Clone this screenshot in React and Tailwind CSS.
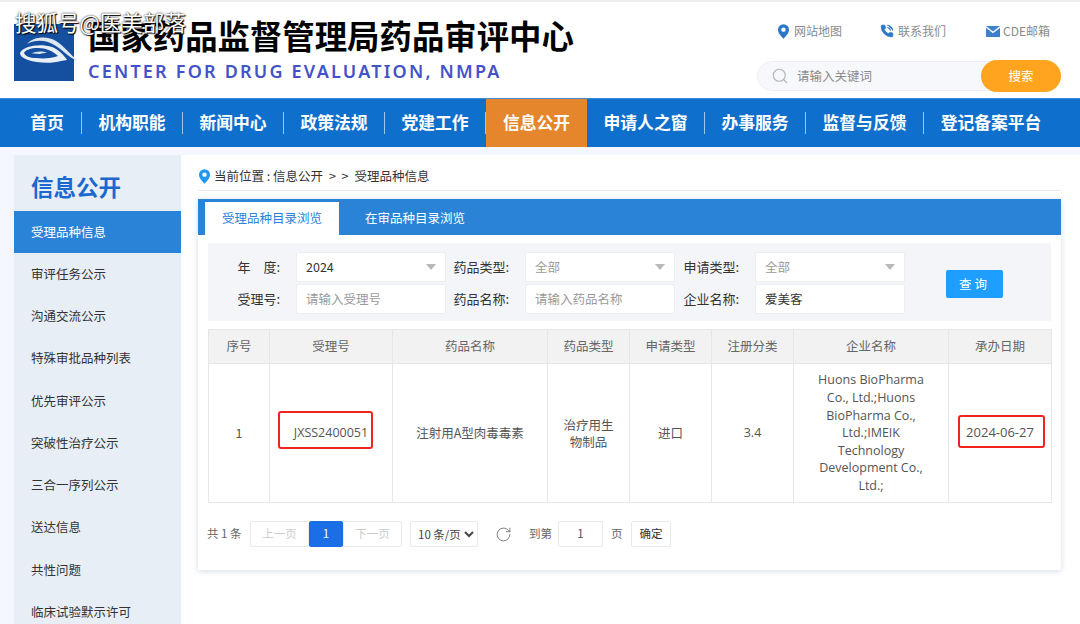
import { PhoneCall, RotateCw, Search } from "lucide-react";

const cjk = "font-['Noto_Sans_CJK_SC','Noto_Sans',sans-serif]";

const navItems = [
  { label: "首页", width: "w-[69px]" },
  { label: "机构职能", width: "w-[101px]" },
  { label: "新闻中心", width: "w-[101px]" },
  { label: "政策法规", width: "w-[101px]" },
  { label: "党建工作", width: "w-[101px]" },
  { label: "信息公开", width: "w-[101px]", active: true },
  { label: "申请人之窗", width: "w-[118px]" },
  { label: "办事服务", width: "w-[101px]" },
  { label: "监督与反馈", width: "w-[118px]" },
  { label: "登记备案平台", width: "w-[134px]", last: true },
];

const sideItems = [
  "受理品种信息",
  "审评任务公示",
  "沟通交流公示",
  "特殊审批品种列表",
  "优先审评公示",
  "突破性治疗公示",
  "三合一序列公示",
  "送达信息",
  "共性问题",
  "临床试验默示许可",
];

const columns = [
  ["序号", "w-[61px]"],
  ["受理号", "w-[123px]"],
  ["药品名称", "w-[155px]"],
  ["药品类型", "w-[82px]"],
  ["申请类型", "w-[82px]"],
  ["注册分类", "w-[82px]"],
  ["企业名称", "w-[155px]"],
  ["承办日期", "w-[103px]"],
];

function Logo() {
  return (
    <svg viewBox="0 0 60 57" className="h-[57px] w-[60px] shrink-0 overflow-visible">
      <rect width="60" height="57" fill="#14509f" />
      <path d="M13 20C20 12 34 12 42 17c8 5 14 13 22 20-9-3-14-10-22-15C33 16 22 15 13 20z" fill="#dde7f2" />
      <path
        fillRule="evenodd"
        d="M6 29C9 22 26 19 38 23c6 2 12 8 15 13-2 0-4 1-6 1-10 3-24 2-33-1-5-2-8-4-8-7zm4 0c1 3 6 5 12 5 8 1 17 0 22-2-5-5-12-8-20-8-7 0-13 2-14 5z"
        fill="#e9eff6"
      />
      <path d="M17 30c5-3 12-3 16-1-3 0-5 0-7 1-3 0-6-1-9 0z" fill="#dde7f2" />
    </svg>
  );
}

function Pin({ className }) {
  return (
    <svg viewBox="0 0 12 16" className={className}>
      <path fillRule="evenodd" d="M6 0a6 6 0 0 1 6 6c0 4-4 7.500-6 10-2-2.500-6-6-6-10a6 6 0 0 1 6-6zm0 3.600a2.400 2.400 0 1 0 0 4.800 2.400 2.400 0 0 0 0-4.800z" fill="currentColor" />
    </svg>
  );
}

function Header() {
  return (
    <div className="flex h-[98px] border-t-2 border-[#eeeeee] bg-white">
      <div className="flex w-[740px] items-end pb-[17px] pl-[14px]">
        <Logo />
        <div className="-mb-[2px] ml-[14px]">
          <div className="text-[32.4px] leading-[44px] font-bold whitespace-nowrap text-black">国家药品监督管理局药品审评中心</div>
          <div className="mt-[2px] font-['Noto_Sans',sans-serif] text-[18px] leading-[24px] font-semibold tracking-[2.2px] whitespace-nowrap text-[#4452c8]">
            CENTER FOR DRUG EVALUATION, NMPA
          </div>
        </div>
      </div>
      <div className="flex-1 pt-[20px]">
        <div className="flex h-[18px] items-center text-[12px] text-[#8a8a8a]">
          <Pin className="ml-[38px] h-[15px] w-[11px] text-[#2b78c8]" />
          <span className="ml-[5px] w-[48px] whitespace-nowrap">网站地图</span>
          <PhoneCall className="ml-[38px] h-[14px] w-[14px] fill-[#2b78c8] text-[#2b78c8]" strokeWidth={1.5} />
          <span className="ml-[4px] w-[48px] whitespace-nowrap">联系我们</span>
          <svg viewBox="0 0 14 11" className="ml-[40px] h-[11px] w-[14px]">
            <path d="M0 0h14L7 5.500z M0 1.800V11h14V1.800L7 7.200z" fill="#3f7fd0" />
          </svg>
          <span className="ml-[3px] whitespace-nowrap">CDE邮箱</span>
        </div>
        <div className="mt-[20px] ml-[17px] flex h-[32px] w-[304px] items-center">
          <div className="flex h-[30px] w-[263px] items-center rounded-l-full border border-[#eceef2] bg-[#f7f8fb] pl-[13px]">
            <Search className="h-[18px] w-[18px] text-[#b5b5b5]" strokeWidth={1.5} />
            <span className="ml-[8px] text-[12.5px] text-[#8c8c8c]">请输入关键词</span>
          </div>
          <button className="-ml-[39px] h-[32px] w-[80px] rounded-full bg-[#ffa41f] text-[12.5px] text-white">搜索</button>
        </div>
      </div>
    </div>
  );
}

function Nav() {
  return (
    <div className="flex h-[49px] border-t border-[#3d8ad6] bg-[#0f6fcc] pl-[13px]">
      {navItems.map((item) => (
        <div
          key={item.label}
          className={
            item.active
              ? "flex h-full w-[101px] items-center justify-center bg-[#e5862d] text-[16.8px] font-bold text-white"
              : `flex ${item.width} h-full items-center justify-center text-[16.8px] font-bold whitespace-nowrap text-white`
          }
        >
          <span className={item.last || item.active ? "w-full text-center" : "flex h-[22px] w-full items-center justify-center border-r border-[#9cc6ee]"}>
            {item.label}
          </span>
        </div>
      ))}
    </div>
  );
}

function Sidebar() {
  return (
    <div className="ml-[14px] w-[167px] shrink-0 bg-[#e8eef6]">
      <div className="flex h-[56px] items-center pt-[8px] pl-[17px] text-[22.5px] font-bold text-[#1a68d0]">信息公开</div>
      {sideItems.map((item, i) => (
        <div
          key={item}
          className={
            i === 0
              ? "flex h-[42px] items-center bg-[#2b83d8] pl-[17px] text-[12.5px] text-white"
              : "flex h-[42.250px] items-center pl-[17px] text-[12.5px] text-[#333333]"
          }
        >
          {item}
        </div>
      ))}
    </div>
  );
}

function Field({ label, value, placeholder, select, dark }) {
  return (
    <div className="flex items-center">
      <span className="w-[88px] pr-[16px] text-right text-[13px] whitespace-nowrap text-[#333333]">{label}</span>
      <div className="flex h-[30px] w-[150px] items-center justify-between rounded-[2px] border border-[#eceef2] bg-white pr-[9px] pl-[9px]">
        <span className={`text-[12.5px] ${dark ? "text-[#333333]" : placeholder ? "text-[#9a9a9a]" : "text-[#999999]"}`}>{value || placeholder}</span>
        {select && <span className="h-0 w-0 border-x-[5px] border-t-[6px] border-x-transparent border-t-[#b8b8b8]" />}
      </div>
    </div>
  );
}

function Filters() {
  return (
    <div className="mt-[8px] flex h-[78px] bg-[#f3f5f9] pt-[9px]">
      <div className="grid grid-cols-[238px_230px_230px] content-start gap-y-[2px]">
        <Field label="年　度:" value="2024" select dark />
        <div className="-ml-[9px]">
          <Field label="药品类型:" value="全部" select />
        </div>
        <div className="-ml-[9px]">
          <Field label="申请类型:" value="全部" select />
        </div>
        <Field label="受理号:" placeholder="请输入受理号" />
        <div className="-ml-[9px]">
          <Field label="药品名称:" placeholder="请输入药品名称" />
        </div>
        <div className="-ml-[9px]">
          <Field label="企业名称:" value="爱美客" dark />
        </div>
      </div>
      <button className="mt-[18px] ml-[40px] h-[28px] w-[57px] rounded-[2px] bg-[#1e9fff] text-[12.5px] tracking-[3px] text-white">查询</button>
    </div>
  );
}

function ResultTable() {
  const td = "border border-[#e6e6e6] text-center text-[12.5px] text-[#555555]";
  return (
    <table className="mt-[8px] w-[843px] table-fixed border-collapse">
      <thead>
        <tr className="h-[34px] bg-[#f2f2f2]">
          {columns.map(([name, width]) => (
            <th key={name} className={`${width} border border-[#e6e6e6] text-center text-[12.5px] font-normal text-[#666666]`}>{name}</th>
          ))}
        </tr>
      </thead>
      <tbody>
        <tr className="h-[139px]">
          <td className={td}>1</td>
          <td className={`${td} relative font-['Open_Sans',sans-serif] text-[12.5px]`}>
            <span>JXSS2400051</span>
            <span className="absolute top-[47px] left-[8px] h-[38px] w-[95px] rounded-[3px] border-2 border-[#f02320]" />
          </td>
          <td className={td}>注射用A型肉毒毒素</td>
          <td className={td}><div className="mx-auto w-[60px] leading-[17px]">治疗用生物制品</div></td>
          <td className={td}>进口</td>
          <td className={`${td} font-['Open_Sans',sans-serif]`}>3.4</td>
          <td className={`${td} px-[18px] font-['Open_Sans',sans-serif] leading-[17.600px]`}>
            Huons BioPharma Co., Ltd.;Huons BioPharma Co., Ltd.;IMEIK Technology Development Co., Ltd.;
          </td>
          <td className={`${td} relative font-['Open_Sans',sans-serif] text-[13px]`}>
            2024-06-27
            <span className="absolute top-[51px] left-[9px] h-[33px] w-[87px] rounded-[3px] border-2 border-[#f02320]" />
          </td>
        </tr>
      </tbody>
    </table>
  );
}

function Pager() {
  const box = "flex h-[26px] items-center justify-center border border-[#eaeaea] bg-white text-[11.5px]";
  return (
    <div className="mt-[18px] flex items-center text-[11.5px] text-[#666666]">
      <span className="-ml-[1px] w-[43px] whitespace-nowrap">共 1 条</span>
      <div className="flex">
        <span className={`${box} w-[59px] rounded-l-[2px] text-[#cccccc]`}>上一页</span>
        <span className="flex h-[26px] w-[34px] items-center justify-center rounded-[2px] bg-[#1a6fe6] text-white">1</span>
        <span className={`${box} w-[59px] rounded-r-[2px] text-[#cccccc]`}>下一页</span>
      </div>
      <select className="ml-[8px] h-[26px] w-[68px] rounded-[2px] border border-[#eaeaea] bg-white pl-[3px] text-[11.5px] text-[#444444]">
        <option>10 条/页</option>
      </select>
      <RotateCw className="ml-[17px] h-[17px] w-[17px] text-[#777777]" strokeWidth={1.3} />
      <span className="ml-[17px] w-[29px] whitespace-nowrap">到第</span>
      <span className={`${box} w-[45px] rounded-[2px] text-[#555555]`}>1</span>
      <span className="ml-[8px] w-[20px]">页</span>
      <span className={`${box} w-[40px] rounded-[2px] text-[#333333]`}>确定</span>
    </div>
  );
}

function Main() {
  return (
    <div className="min-w-0 flex-1 bg-white pt-[9px] pr-[19px] pl-[17px]">
      <div className="flex h-[27px] items-center border-b border-[#e8e8e8] pb-[2px] pl-[1px] text-[12.5px] text-[#333333]">
        <Pin className="mr-[4px] h-[15px] w-[11px] text-[#2196f3]" />
        <span>当前位置 : 信息公开</span>
        <span className="ml-[6px]">&gt; &nbsp;&gt;</span>
        <span className="ml-[6px]">受理品种信息</span>
      </div>
      <div className="mt-[8px] h-[371px] bg-white shadow-[0_1px_6px_rgba(120,150,190,0.35)]">
        <div className="flex h-[36px] items-end bg-[#2b83d8] pl-[7px]">
          <div className="flex h-[33px] w-[134px] items-center justify-center bg-white text-[12.5px] text-[#2b83d8]">受理品种目录浏览</div>
          <div className="flex h-[33px] w-[152px] items-center justify-center text-[12.5px] text-white">在审品种目录浏览</div>
        </div>
        <div className="px-[10px]">
          <Filters />
          <ResultTable />
          <Pager />
        </div>
      </div>
    </div>
  );
}

export default function App() {
  return (
    <div className={`relative h-[624px] w-[1080px] overflow-hidden bg-[#f4f8fe] ${cjk}`}>
      <Header />
      <Nav />
      <div className="mt-[8px] flex h-[477px]">
        <Sidebar />
        <Main />
      </div>
      <div className="absolute top-[8px] left-[15px] text-[21.5px] leading-[28px] whitespace-nowrap text-white [text-shadow:0_0_2px_#000,1px_1px_1px_#000]">搜狐号@医美部落</div>
    </div>
  );
}
